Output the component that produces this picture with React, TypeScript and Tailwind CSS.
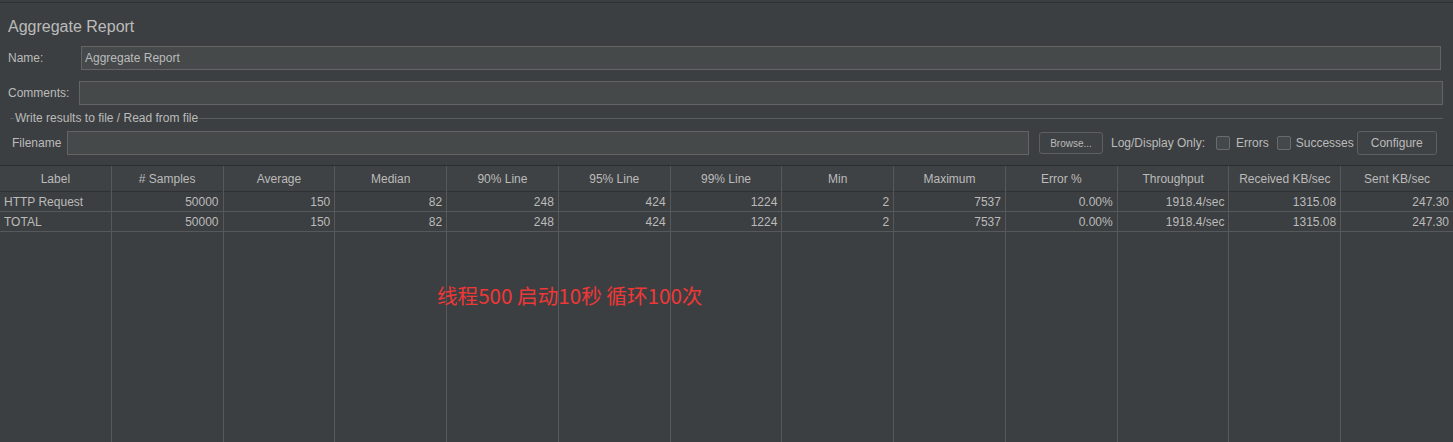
import React from "react";

const headers = ["Label", "# Samples", "Average", "Median", "90% Line", "95% Line", "99% Line", "Min", "Maximum", "Error %", "Throughput", "Received KB/sec", "Sent KB/sec"];
const rows = [
  ["HTTP Request", "50000", "150", "82", "248", "424", "1224", "2", "7537", "0.00%", "1918.4/sec", "1315.08", "247.30"],
  ["TOTAL", "50000", "150", "82", "248", "424", "1224", "2", "7537", "0.00%", "1918.4/sec", "1315.08", "247.30"],
];

function Checkbox() {
  return <span className="inline-block w-[14px] h-[14px] border border-[#6b6b6b] bg-[#43494a] rounded-[2px]" />;
}

export default function App() {
  return (
    <div className="w-[1453px] h-[442px] bg-[#3c3f41] text-[#bbbbbb] text-[12px] overflow-hidden flex flex-col relative" style={{ fontFamily: '"Liberation Sans", "Noto Sans", "Noto Sans CJK SC", sans-serif' }}>
      <div className="h-[3px] border-b border-[#2f3133] shrink-0" />
      <div className="pl-[8px] pt-[13px] h-[41px] text-[16px] leading-[22px] shrink-0">Aggregate Report</div>
      <div className="flex items-center h-[24px] shrink-0 mt-[2px]">
        <div className="w-[81px] pl-[8px]">Name:</div>
        <div className="w-[1360px] h-[24px] border border-[#646464] bg-[#45494a] px-[3px] flex items-center">Aggregate Report</div>
      </div>
      <div className="flex items-center h-[24px] shrink-0 mt-[11px]">
        <div className="w-[79px] pl-[8px]">Comments:</div>
        <div className="w-[1364px] h-[24px] border border-[#646464] bg-[#45494a]" />
      </div>
      <div className="flex items-center h-[14px] shrink-0 mt-[6px] pl-[10px] pr-[10px]">
        <div className="w-[4px] border-t border-[#5a5d5f]" />
        <div className="px-[1px]">Write results to file / Read from file</div>
        <div className="flex-1 border-t border-[#5a5d5f]" />
      </div>
      <div className="flex items-center h-[24px] shrink-0 mt-[6px]">
        <div className="w-[67px] pl-[12px]">Filename</div>
        <div className="w-[962px] h-[24px] border border-[#646464] bg-[#45494a]" />
        <div className="ml-[10px] w-[64px] h-[22px] border border-[#5e6060] bg-[#3f4244] rounded-[3px] flex items-center justify-center text-[10px]">Browse...</div>
        <div className="ml-[8px]">Log/Display Only:</div>
        <div className="ml-[11px] flex items-center gap-[6px]"><Checkbox /><span>Errors</span></div>
        <div className="ml-[8px] flex items-center gap-[5px]"><Checkbox /><span>Successes</span></div>
        <div className="ml-[3px] w-[80px] h-[24px] border border-[#5e6060] bg-[#3f4244] rounded-[3px] flex items-center justify-center">Configure</div>
      </div>
      <div className="mt-[10px] flex-1 border-t border-[#2b2d2e] grid grid-cols-[repeat(13,minmax(0,1fr))]">
        {headers.map((h, i) => (
          <div key={i} className={`flex flex-col ${i < 12 ? "border-r border-[#55595b]" : ""}`}>
            <div className="h-[26px] bg-[#3f4244] border-b border-[#2f3133] flex items-center justify-center">{h}</div>
            {rows.map((r, j) => (
              <div key={j} className={`h-[20px] border-b border-[#55595b] flex items-center px-[4px] ${i === 0 ? "justify-start" : "justify-end"}`}>{r[i]}</div>
            ))}
          </div>
        ))}
      </div>
      <div className="absolute left-[437px] top-[281px] text-[20.6px] leading-[28px] text-[#f03737]" style={{ fontFamily: '"Noto Sans CJK SC", "Noto Sans", sans-serif' }}>线程500 启动10秒 循环100次</div>
    </div>
  );
}
